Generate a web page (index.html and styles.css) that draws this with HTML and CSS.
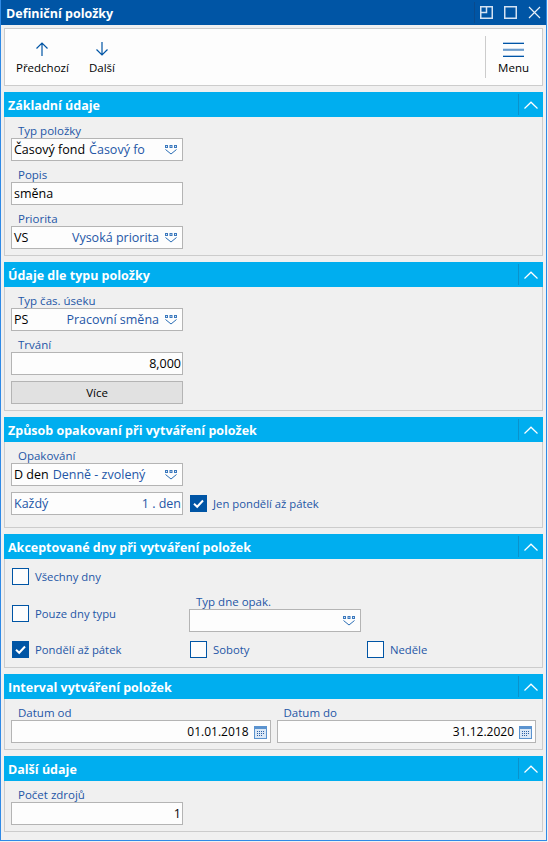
FILE: index.html
```html
<!DOCTYPE html>
<html lang="cs">
<head>
<meta charset="utf-8">
<title>Definiční položky</title>
<link rel="stylesheet" href="styles.css">
</head>
<body>
<svg class="defs" width="0" height="0" aria-hidden="true">
  <symbol id="dd" viewBox="0 0 12 10">
    <path d="M0 0h3v3H0zM4.500 0h3v3h-3zM9 0h3v3H9z" fill="#3a78bd"/>
    <path d="M1 1h1v1H1zM5.500 1h1v1h-1zM10 1h1v1h-1z" fill="#dbe8f6"/>
    <path d="M.5 4.500l5.500 4.500 5.500-4.500" fill="none" stroke="#2a6db5" stroke-width="1"/>
  </symbol>
  <symbol id="cal" viewBox="0 0 13 14">
    <rect x=".5" y="1.500" width="12" height="12" fill="#dbe8f6" stroke="#5b93cf"/>
    <rect x="0" y="1" width="13" height="3" fill="#5b93cf"/>
    <path d="M3 6h1v1H3zM5 6h1v1H5zM7 6h1v1H7zM9 6h1v1H9zM3 8h1v1H3zM5 8h1v1H5zM7 8h1v1H7zM9 8h1v1H9zM3 10h1v1H3zM5 10h1v1H5zM7 10h1v1H7z" fill="#2a5fa5"/>
  </symbol>
  <symbol id="chev" viewBox="0 0 14 8">
    <path d="M.5 7.500L7 1.200l6.500 6.300" fill="none" stroke="#fff" stroke-width="1.200"/>
  </symbol>
  <symbol id="tick" viewBox="0 0 17 17">
    <rect width="17" height="17" fill="#0055a5"/>
    <path d="M4 8.800l3.200 3L13 5.500" fill="none" stroke="#fff" stroke-width="2"/>
  </symbol>
</svg>
<div class="window">
  <header class="titlebar">
    <span class="title">Definiční položky</span>
    <span class="win-btns">
      <svg class="win-icon" width="13" height="13" viewBox="0 0 13 13"><path d="M.75.750h11.500v11.500H.75zM.75 6.500h5.750V.75" fill="none" stroke="#d4e2f2" stroke-width="1.500"/></svg>
      <svg class="win-icon" width="13" height="13" viewBox="0 0 13 13"><path d="M.75.750h11.500v11.500H.75z" fill="none" stroke="#d4e2f2" stroke-width="1.500"/></svg>
      <svg class="win-icon" width="13" height="13" viewBox="0 0 13 13"><path d="M1 1l11 11M12 1L1 12" fill="none" stroke="#e8eff8" stroke-width="1.200"/></svg>
    </span>
  </header>

  <div class="toolbar">
    <div class="tool tool-prev">
      <svg width="14" height="14" viewBox="0 0 14 14"><path d="M7 14V1M1.500 6.500L7 1l5.500 5.500" fill="none" stroke="#0055a5" stroke-width="1.200"/></svg>
      <span>Předchozí</span>
    </div>
    <div class="tool tool-next">
      <svg width="14" height="14" viewBox="0 0 14 14"><path d="M7 0v13M1.500 7.500L7 13l5.500-5.500" fill="none" stroke="#0055a5" stroke-width="1.200"/></svg>
      <span>Další</span>
    </div>
    <div class="tool tool-menu">
      <svg width="21" height="15" viewBox="0 0 21 15"><path d="M0 .5h21M0 7h21M0 13.500h21" stroke="#a9c6e6" stroke-width="1"/><path d="M0 1.500h21M0 8h21M0 14.500h21" stroke="#0055a5" stroke-width="1"/></svg>
      <span>Menu</span>
    </div>
  </div>

  <section class="panel">
    <h2 class="panel-head"><span>Základní údaje</span><i class="collapse"><svg width="14" height="8"><use href="#chev"/></svg></i></h2>
    <div class="panel-body pb-6">
      <label class="field-label">Typ položky</label>
      <div class="input w172"><span class="val">Časový fond</span><span class="link gap4">Časový fo</span><svg class="dd" width="12" height="10"><use href="#dd"/></svg></div>
      <label class="field-label">Popis</label>
      <div class="input w172"><span class="val">směna</span></div>
      <label class="field-label">Priorita</label>
      <div class="input w172"><span class="val">VS</span><span class="link push">Vysoká priorita</span><svg class="dd" width="12" height="10"><use href="#dd"/></svg></div>
    </div>
  </section>

  <section class="panel">
    <h2 class="panel-head"><span>Údaje dle typu položky</span><i class="collapse"><svg width="14" height="8"><use href="#chev"/></svg></i></h2>
    <div class="panel-body pb-6">
      <label class="field-label">Typ čas. úseku</label>
      <div class="input w172"><span class="val">PS</span><span class="link push">Pracovní směna</span><svg class="dd" width="12" height="10"><use href="#dd"/></svg></div>
      <label class="field-label">Trvání</label>
      <div class="input w172 right"><span class="val">8,000</span></div>
      <button class="more" type="button">Více</button>
    </div>
  </section>

  <section class="panel">
    <h2 class="panel-head"><span>Způsob opakovaní při vytváření položek</span><i class="collapse"><svg width="14" height="8"><use href="#chev"/></svg></i></h2>
    <div class="panel-body pb-12">
      <label class="field-label">Opakování</label>
      <div class="input w172"><span class="val">D den</span><span class="link gap4">Denně - zvolený</span><svg class="dd" width="12" height="10"><use href="#dd"/></svg></div>
      <div class="repeat-row">
        <div class="input w172"><span class="link">Každý</span><span class="link push">1 . den</span></div>
        <span class="check"><svg width="17" height="17"><use href="#tick"/></svg><span class="link">Jen pondělí až pátek</span></span>
      </div>
    </div>
  </section>

  <section class="panel">
    <h2 class="panel-head"><span>Akceptované dny při vytváření položek</span><i class="collapse"><svg width="14" height="8"><use href="#chev"/></svg></i></h2>
    <div class="panel-body days">
      <div class="day-row"><span class="check"><i class="box"></i><span class="link">Všechny dny</span></span></div>
      <div class="day-row mid">
        <span class="check c1 drop"><i class="box"></i><span class="link">Pouze dny typu</span></span>
        <div class="c2">
          <label class="field-label near">Typ dne opak.</label>
          <div class="input w172"><svg class="dd" width="12" height="10"><use href="#dd"/></svg></div>
        </div>
      </div>
      <div class="day-row last">
        <span class="check c1"><svg width="17" height="17"><use href="#tick"/></svg><span class="link">Pondělí až pátek</span></span>
        <span class="check c2"><i class="box"></i><span class="link">Soboty</span></span>
        <span class="check"><i class="box"></i><span class="link">Neděle</span></span>
      </div>
    </div>
  </section>

  <section class="panel">
    <h2 class="panel-head"><span>Interval vytváření položek</span><i class="collapse"><svg width="14" height="8"><use href="#chev"/></svg></i></h2>
    <div class="panel-body pb-6 dates">
      <div class="date-col">
        <label class="field-label">Datum od</label>
        <div class="input right date"><span class="val">01.01.2018</span><svg class="cal" width="13" height="14"><use href="#cal"/></svg></div>
      </div>
      <div class="date-col">
        <label class="field-label">Datum do</label>
        <div class="input right date"><span class="val">31.12.2020</span><svg class="cal" width="13" height="14"><use href="#cal"/></svg></div>
      </div>
    </div>
  </section>

  <section class="panel">
    <h2 class="panel-head"><span>Další údaje</span><i class="collapse"><svg width="14" height="8"><use href="#chev"/></svg></i></h2>
    <div class="panel-body pb-6">
      <label class="field-label">Počet zdrojů</label>
      <div class="input w172 right"><span class="val">1</span></div>
    </div>
  </section>
</div>
</body>
</html>
```

FILE: styles.css
```css
* { box-sizing: border-box; }
html, body { margin: 0; height: 100%; background: #f0f0f0; }
body { font-family: "Open Sans", "Noto Sans", sans-serif; font-size: 11.500px; color: #000; overflow: hidden; }
.defs { position: absolute; }
.window {
  width: 547px; height: 841px;
  border: 1px solid #2f8ae6; border-top: 0;
  background: #f0f0f0;
  display: flex; flex-direction: column;
}
.titlebar {
  height: 25px; background: #0055a5; color: #fff;
  display: flex; align-items: center; justify-content: space-between;
  padding: 0 5px 0 5px;
}
.title { font-weight: 700; font-size: 12.500px; padding-top: 1px; }
.win-btns { display: flex; align-items: center; gap: 10px; border-left: 1px solid #0a4a8c; height: 21px; padding-left: 5px; }
.win-btns .win-icon:nth-child(2) { margin: 0 1px; }
.toolbar {
  height: 58px; margin: 3px 3px 6px 3px;
  background: #fdfdfd; border: 1px solid #ccc;
  display: flex;
}
.tool { display: flex; flex-direction: column; align-items: center; gap: 4px; padding-top: 13px; line-height: 16px; font-size: 11.500px; }
.tool-prev { margin-left: 11px; }
.tool-next { margin-left: 20px; }
.tool-menu { margin: 7px 0 6px auto; padding: 6px 13px 0 12px; border-left: 1px solid #ccc; gap: 3px; height: 42px; }
.panel { margin: 0 3px 6px 3px; background: #f0f0f0; }
.panel-head {
  margin: 0; height: 25px; background: #00aeef; color: #fff;
  font-size: 12.500px; font-weight: 700;
  display: flex; align-items: center; justify-content: space-between;
  padding-left: 4px;
}
.panel-head span { padding-top: 1px; }
.collapse { display: flex; align-items: center; justify-content: center; width: 25px; height: 21px; border-left: 1px solid #0a92cc; padding-right: 1px; }
.panel-body { border: 1px solid #ccc; border-top: 0; padding: 0 6px; }
.pb-6 { padding-bottom: 6px; }
.pb-12 { padding-bottom: 12px; }
.field-label { display: block; height: 21px; padding: 6px 0 0 7px; color: #2456a6; line-height: 15px; }
.input {
  height: 23px; background: #fdfdfd; border: 1px solid #b4b4b4;
  display: flex; align-items: center; padding: 0 1px 0 2px;
  font-size: 12.500px; white-space: nowrap; overflow: hidden;
}
.w172 { width: 172px; }
.right { justify-content: flex-end; }
.date { font-size: 12px; }
.link { color: #2456a6; }
.gap4 { margin-left: 4px; }
.push { margin-left: auto; }
.dd { margin: 0 4px 0 auto; flex: none; }
.push + .dd { margin-left: 6px; }
.cal { margin: 0 2px 0 5px; flex: none; }
.more {
  display: block; width: 172px; height: 23px; margin: 6px 0 0;
  background: #e1e1e1; border: 1px solid #b4b4b4; padding: 0;
  font: inherit; color: #000;
}
.repeat-row { display: flex; align-items: center; gap: 7px; margin-top: 6px; }
.check { display: inline-flex; align-items: center; gap: 6px; white-space: nowrap; font-size: 11.300px; }
.box { display: block; width: 17px; height: 17px; border: 1px solid #0055a5; background: #fdfdfd; flex: none; }
.days { padding: 9px 6px 9px 7px; }
.day-row { display: flex; height: 17px; }
.day-row.mid { height: 44px; margin-top: 3px; }
.day-row.last { margin-top: 9px; }
.c1 { width: 178px; align-self: flex-start; }
.c2 { width: 177px; }
.drop { margin-top: 17px; }
.mid .c2 { margin-left: -1px; }
.near { height: 21px; }
.dates { display: flex; gap: 6px; }
.date-col { flex: 1; min-width: 0; }
```
